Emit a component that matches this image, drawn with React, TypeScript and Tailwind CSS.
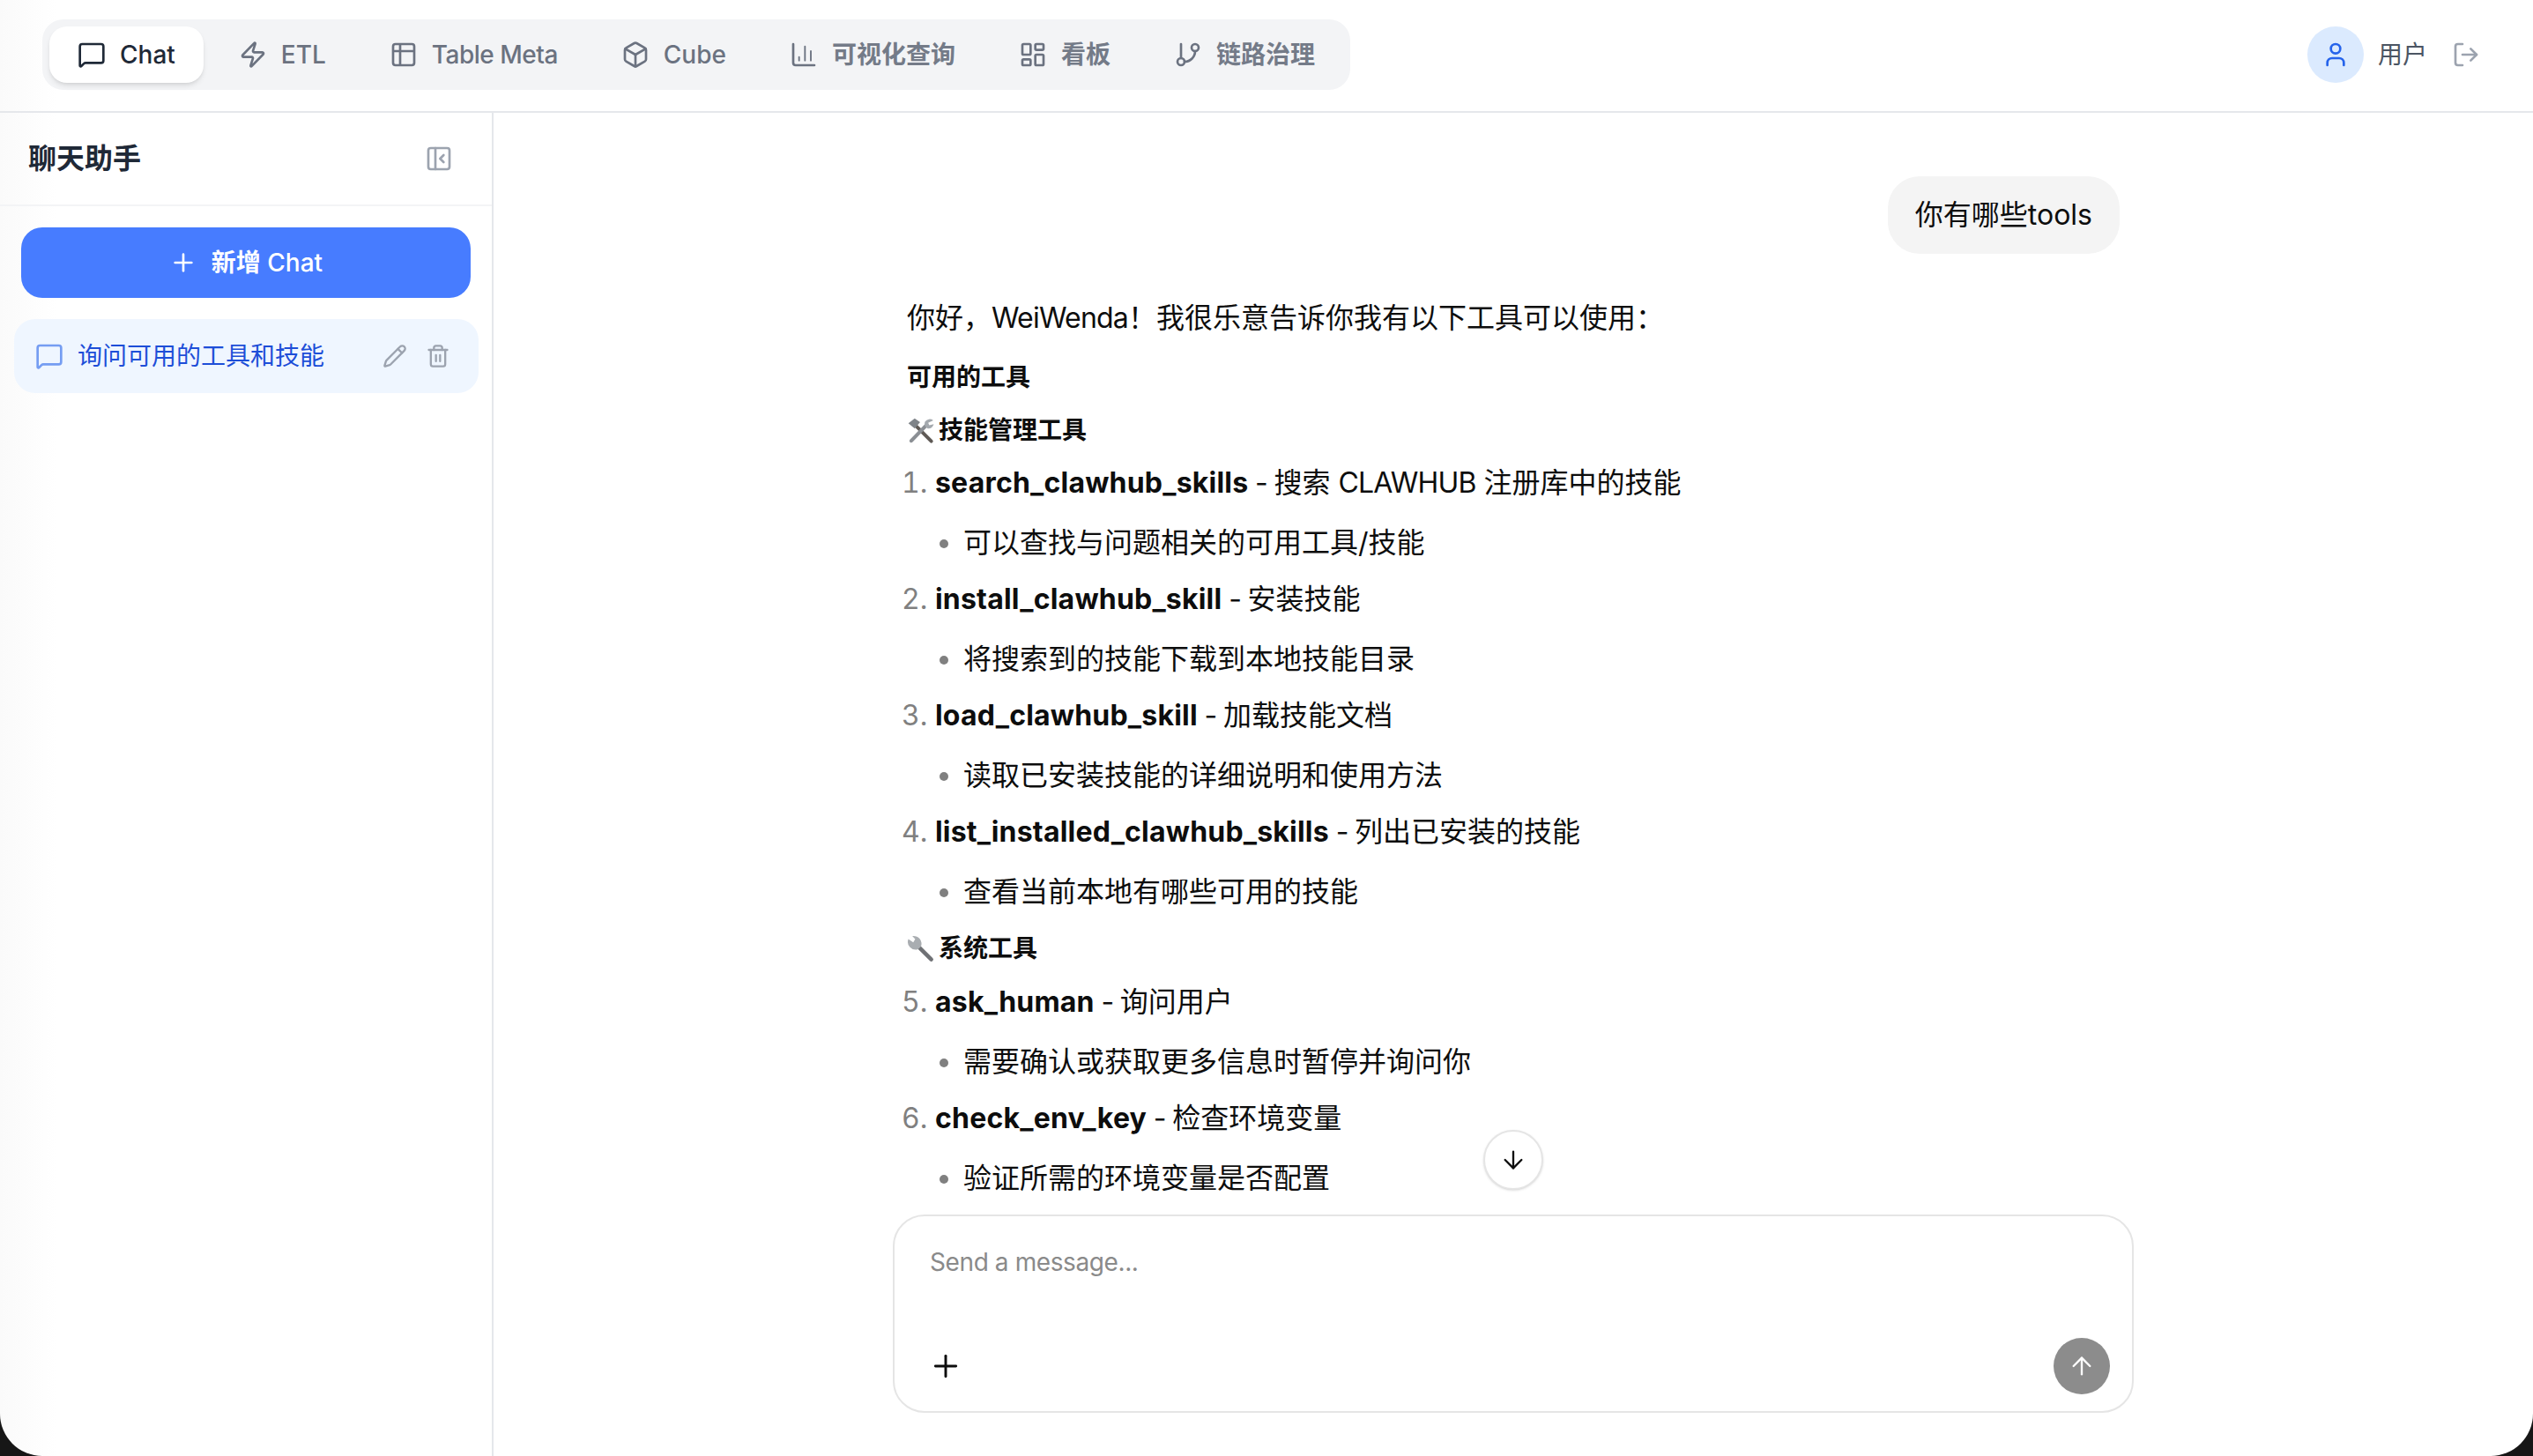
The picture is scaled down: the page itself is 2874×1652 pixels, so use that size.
import React from "react";
import {
  ArrowDown,
  ArrowUp,
  Box,
  GitBranch,
  LayoutDashboard,
  LogOut,
  MessageSquare,
  PanelLeftClose,
  Pencil,
  Plus,
  Table2,
  Trash2,
  User,
  Zap,
} from "lucide-react";

const BarsIcon = () => (
  <svg width={32} height={32} viewBox="0 0 24 24" fill="none" stroke="currentColor" strokeWidth={2} strokeLinecap="round" strokeLinejoin="round">
    <path d="M3 3v16a2 2 0 0 0 2 2h16" />
    <path d="M18 17V9" strokeWidth={1.4} />
    <path d="M13 17V5" strokeWidth={1.4} />
    <path d="M8 17v-3" strokeWidth={1.4} />
  </svg>
);

const TABS = [
  { name: "Chat", icon: <MessageSquare size={32} />, cls: "font-medium" },
  { name: "ETL", icon: <Zap size={32} />, cls: "font-medium" },
  { name: "Table Meta", icon: <Table2 size={32} />, cls: "font-medium tracking-[-0.5px]" },
  { name: "Cube", icon: <Box size={32} />, cls: "font-medium" },
  { name: "可视化查询", icon: <BarsIcon />, cls: "font-semibold text-[#747b88]" },
  { name: "看板", icon: <LayoutDashboard size={32} />, cls: "font-semibold text-[#747b88]" },
  { name: "链路治理", icon: <GitBranch size={32} />, cls: "font-semibold text-[#747b88]" },
];

const ToolsEmoji = () => (
  <svg width={31} height={31} viewBox="0 0 28 28" fill="none" strokeLinecap="round">
    <path d="M9 9l16 16" stroke="#5f5a56" strokeWidth={3.6} />
    <path d="M1.5 6.5L8 1.5l5.5 4-5.5 6.5z" fill="#7f8489" />
    <path d="M20 8.5L4.5 24.5" stroke="#8b8f94" strokeWidth={3.8} />
    <path d="M27 3.5a6 6 0 0 0-8.5 1.5 6 6 0 0 0 3 7 6 6 0 0 0 6-4.5l-4.5 1-1.2-2.4z" fill="#a4a9ae" />
  </svg>
);

const WrenchEmoji = () => (
  <svg width={31} height={31} viewBox="0 0 28 28" fill="none" strokeLinecap="round">
    <path d="M10 10l15 15" stroke="#6f7175" strokeWidth={4} />
    <path d="M1.5 4l5 3.5 2-3.5-3-3a8 8 0 0 1 9 10.5l-3 3a8 8 0 0 1-10-10.5z" fill="#a9adb1" />
  </svg>
);

const Tool = ({ n, name, desc, sub }: { n: number; name: string; desc: React.ReactNode; sub: string }) => (
  <ol start={n} className="list-decimal pl-[32px] marker:text-[#808080]">
    <li>
      <p>
        <strong className="font-bold tracking-[0.2px]">{name}</strong>
        <span className="tracking-[-1.2px]"> - </span>
        {desc}
      </p>
      <ul className="mt-[12px] list-disc pl-[32px] marker:text-[#808080]">
        <li>{sub}</li>
      </ul>
    </li>
  </ol>
);

export default function App() {
  return (
    <div className="h-screen w-screen overflow-hidden bg-[#161616]">
      <div className="flex h-full flex-col overflow-hidden rounded-b-[48px] bg-[linear-gradient(90deg,#fafafa,#ffffff_64px)] font-[Inter,'Noto_Sans_CJK_SC',sans-serif]">
        <header className="flex h-[128px] shrink-0 items-center justify-between border-b-2 border-[#e5e7eb] pb-[2px] pl-[48px] pr-[60px]">
          <nav className="flex h-[80px] items-center gap-2 rounded-[24px] bg-[#f3f4f6] p-2">
            {TABS.map((tab, i) => (
              <div
                key={tab.name}
                className={
                  i === 0
                    ? "flex h-[64px] items-center gap-4 rounded-[20px] bg-white px-8 text-[28px] text-[#1f2937] shadow-md"
                    : "flex h-[64px] items-center gap-4 rounded-[20px] px-8 text-[28px] text-[#6b7280]"
                }
              >
                {tab.icon}
                <span className={tab.cls}>{tab.name}</span>
              </div>
            ))}
          </nav>
          <div className="flex items-center">
            <div className="flex h-[64px] w-[64px] items-center justify-center rounded-full bg-[#dbeafe] text-[#2563eb]">
              <User size={32} />
            </div>
            <span className="ml-4 text-[28px] text-[#4b5563]">用户</span>
            <LogOut size={32} className="ml-[28px] text-[#9ca3af]" />
          </div>
        </header>

        <div className="flex min-h-0 flex-1">
          <aside className="flex w-[560px] shrink-0 flex-col border-r-2 border-[#e5e7eb]">
            <div className="flex h-[106px] items-center justify-between border-b-2 border-[#f3f4f6] pl-8 pr-[44px]">
              <h2 className="text-[32px] font-semibold text-[#1f2937]">聊天助手</h2>
              <PanelLeftClose size={32} className="text-[#9ca3af]" />
            </div>
            <button className="ml-6 mt-6 flex h-[80px] w-[510px] items-center justify-center gap-4 rounded-[24px] bg-[#477cff] text-[28px] font-medium text-white">
              <Plus size={32} />
              <span>
                <span className="font-semibold">新增</span> Chat
              </span>
            </button>
            <div className="ml-4 mt-6 flex h-[84px] w-[527px] items-center rounded-[24px] bg-[#eff6ff] pl-6 pr-[32px]">
              <MessageSquare size={32} className="text-[#2563eb] opacity-60" />
              <span className="ml-4 flex-1 text-[28px] text-[#1d4ed8]">询问可用的工具和技能</span>
              <div className="flex items-center gap-[21px] text-[#9ca3af]">
                <Pencil size={28} />
                <Trash2 size={28} />
              </div>
            </div>
          </aside>

          <main className="relative flex min-w-0 flex-1 flex-col">
            <div className="min-h-0 flex-1 overflow-hidden pt-[72px]">
              <div className="mx-auto flex w-[1376px] flex-col text-[32px] leading-[56px] text-[#0d0d0d]">
                <div className="self-end rounded-[36px] bg-[#f4f4f4] px-[31px] py-4">你有哪些tools</div>
                <p className="mt-[45px]">
                  你好，<span className="tracking-[-0.8px]">WeiWenda</span>！我很乐意告诉你我有以下工具可以使用：
                </p>
                <h3 className="mt-[19px] text-[28px] font-bold leading-[40px]">可用的工具</h3>
                <h3 className="mb-[12px] mt-[20px] flex items-center gap-[5px] text-[28px] font-bold leading-[40px]">
                  <ToolsEmoji />
                  技能管理工具
                </h3>
                <Tool
                  n={1}
                  name="search_clawhub_skills"
                  desc={
                    <>
                      搜索 <span className="tracking-[-0.8px]">CLAWHUB</span> 注册库中的技能
                    </>
                  }
                  sub="可以查找与问题相关的可用工具/技能"
                />
                <div className="h-[8px]" />
                <Tool n={2} name="install_clawhub_skill" desc="安装技能" sub="将搜索到的技能下载到本地技能目录" />
                <div className="h-[8px]" />
                <Tool n={3} name="load_clawhub_skill" desc="加载技能文档" sub="读取已安装技能的详细说明和使用方法" />
                <div className="h-[8px]" />
                <Tool n={4} name="list_installed_clawhub_skills" desc="列出已安装的技能" sub="查看当前本地有哪些可用的技能" />
                <h3 className="mb-[13px] mt-[16px] flex items-center gap-[5px] text-[28px] font-bold leading-[40px]">
                  <WrenchEmoji />
                  系统工具
                </h3>
                <Tool n={5} name="ask_human" desc="询问用户" sub="需要确认或获取更多信息时暂停并询问你" />
                <div className="h-[8px]" />
                <Tool n={6} name="check_env_key" desc="检查环境变量" sub="验证所需的环境变量是否配置" />
              </div>
            </div>

            <div className="absolute bottom-[302px] left-1/2 flex h-[68px] w-[68px] -translate-x-1/2 items-center justify-center rounded-full border-2 border-[#e5e5e5] bg-white text-[#0d0d0d] shadow-sm">
              <ArrowDown size={32} strokeWidth={1.75} />
            </div>

            <div className="shrink-0 pb-[49px]">
              <div className="mx-auto flex h-[225px] w-[1408px] flex-col rounded-[36px] border-2 border-[#e5e5e5] bg-white">
                <textarea
                  rows={1}
                  placeholder="Send a message..."
                  className="flex-1 resize-none bg-transparent px-[40px] pt-[32px] text-[28px] leading-[40px] tracking-[-0.4px] outline-none placeholder:text-[#8a8a8a]"
                />
                <div className="flex items-center justify-between pb-[19px] pl-[38px] pr-[25px]">
                  <Plus size={40} strokeWidth={1.75} className="text-[#0d0d0d]" />
                  <div className="flex h-[64px] w-[64px] items-center justify-center rounded-full bg-[#8c8c8c] text-white">
                    <ArrowUp size={32} strokeWidth={1.75} />
                  </div>
                </div>
              </div>
            </div>
          </main>
        </div>
      </div>
    </div>
  );
}
